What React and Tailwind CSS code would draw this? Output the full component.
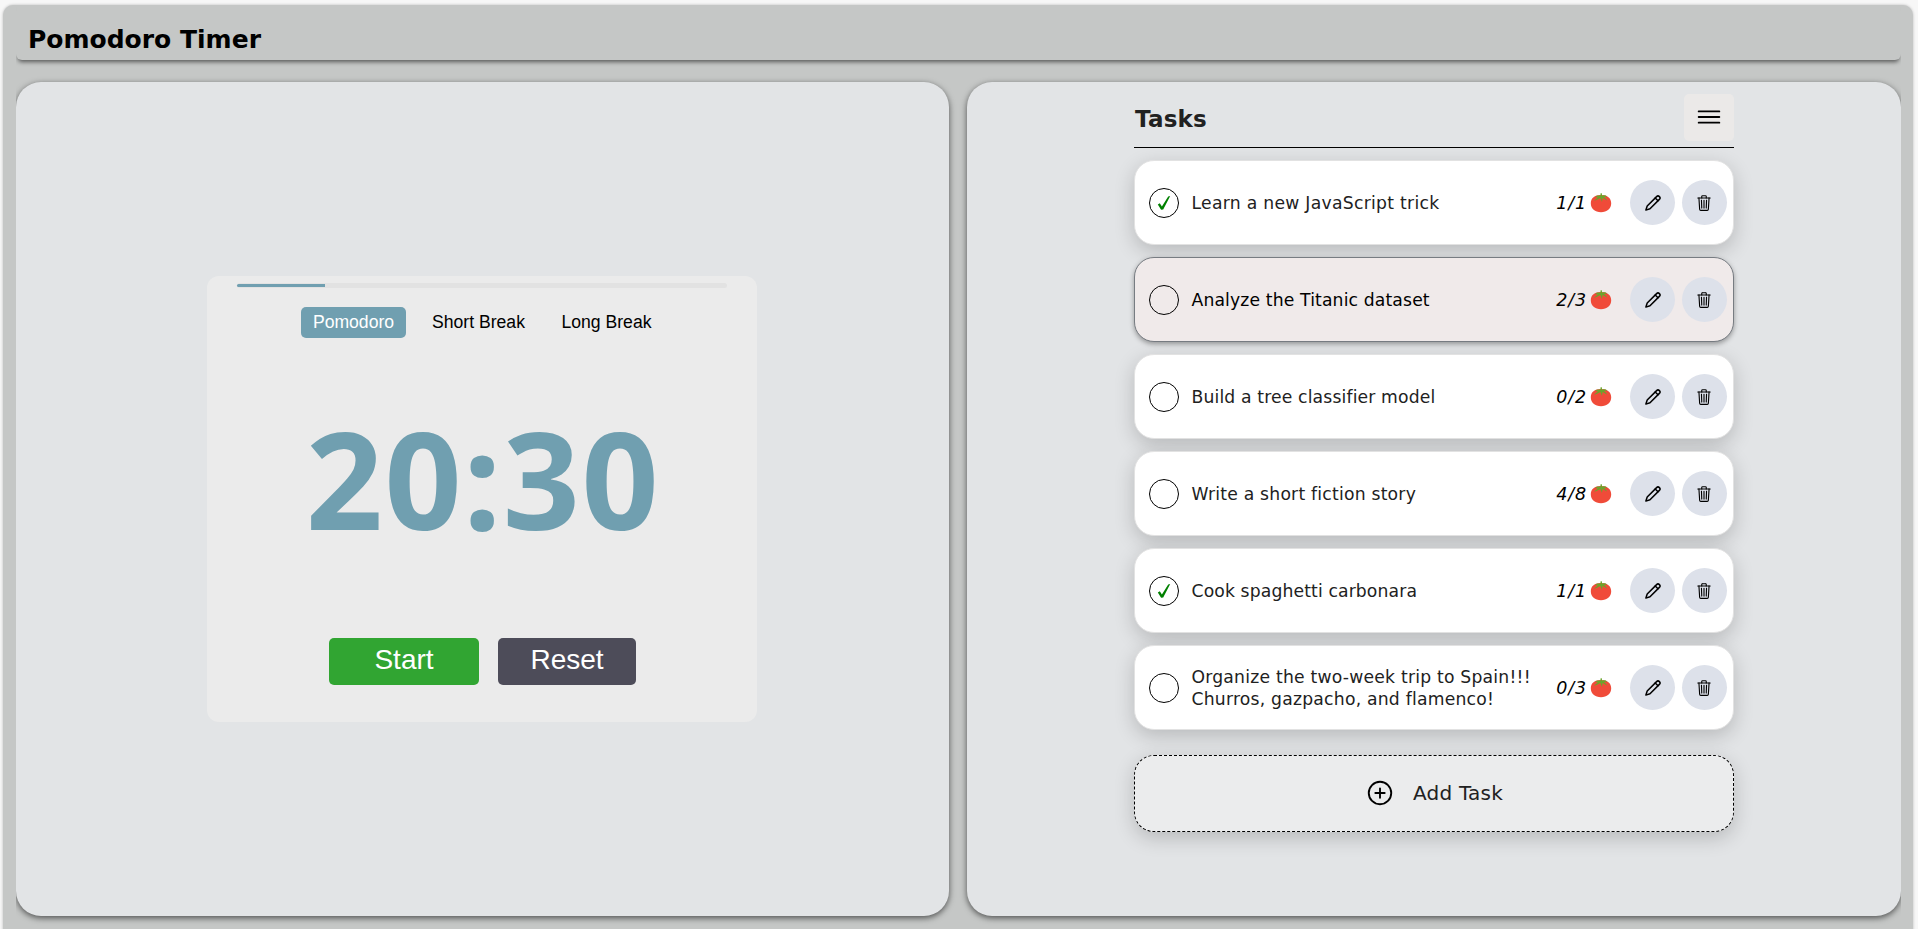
import { IoMenuOutline, IoAddCircleOutline, IoTrashOutline } from "react-icons/io5";

const tasks = [
  { lines: ["Learn a new JavaScript trick"], count: "1/1", done: true, tracking: "tracking-[0.28px]" },
  { lines: ["Analyze the Titanic dataset"], count: "2/3", active: true, tracking: "tracking-[0.14px]" },
  { lines: ["Build a tree classifier model"], count: "0/2", tracking: "tracking-[0.15px]" },
  { lines: ["Write a short fiction story"], count: "4/8", tracking: "tracking-[0.22px]" },
  { lines: ["Cook spaghetti carbonara"], count: "1/1", done: true, tracking: "tracking-[0.13px]" },
  { lines: ["Organize the two-week trip to Spain!!!", "Churros, gazpacho, and flamenco!"], count: "0/3", tracking: "tracking-[0.22px]" },
];

function Tomato() {
  return (
    <svg viewBox="0 0 22 20" className="h-5 w-[22px]">
      <path fill="#f04b39" d="M11 2C16.8 1.8 21.2 4.8 21.2 10.3C21.2 15.6 17 19.3 11 19.3S.8 15.6.8 10.3C.8 4.8 5.2 1.8 11 2Z" />
      <path fill="#6aa52c" d="M10.4.6 11.9.3 12 2.8C14 2 16 2.4 17.2 3.4L13.8 4C15.3 4.8 16.6 6 16.9 7.6L12.5 5.1 12 9 10.3 5C8.5 5.7 6.8 7.4 4 7.5L8 4.4 5.2 4C6.8 2.5 8.7 2.3 10.6 2.8Z" />
    </svg>
  );
}

function Pencil() {
  return (
    <svg viewBox="0 0 16 16" className="size-4" fill="none" stroke="#000" strokeWidth="1.5" strokeLinecap="round" strokeLinejoin="round">
      <path d="M.9 15.1 2.2 11 11.6 1.6A1.95 1.95 0 0 1 14.4 4.4L5 13.8Z" />
      <path d="M10.2 3 13 5.8" />
    </svg>
  );
}

function Task({ task }) {
  return (
    <li
      className={
        "flex h-[85px] items-center rounded-[20px] border pl-[14px] pr-[6px] " +
        (task.active
          ? "border-[#777c82] bg-[#f0eaea] shadow-[0_2px_5px_rgba(0,0,0,0.35)]"
          : "border-[#e2e2e2] bg-white shadow-[0_6px_20px_rgba(0,0,0,0.19)]")
      }
    >
      <span className="flex size-[30px] shrink-0 items-center justify-center rounded-full border border-black">
        {task.done && (
          <svg viewBox="0 0 14 16" className="size-4">
            <path d="M.8 9.4 2.8 8.3 4.9 11.4 11.2 1.6 13.2 1 6.2 14.4 4.1 14.7Z" fill="#008000" />
          </svg>
        )}
      </span>
      <div className={"ml-[12.5px] flex-1 text-[17.2px] leading-[22px] " + task.tracking + (task.active ? " text-black" : " text-[#212121]")}>
        {task.lines.map((line) => (
          <div key={line} className="whitespace-nowrap">{line}</div>
        ))}
      </div>
      <span className="mr-[3px] pt-px text-[17.5px] italic tracking-[0.9px] text-black">{task.count}</span>
      <Tomato />
      <button className="ml-[18px] flex size-[45px] items-center justify-center rounded-full bg-[#dde1ea]">
        <Pencil />
      </button>
      <button className="ml-[7px] flex size-[45px] items-center justify-center rounded-full bg-[#dde1ea] pr-px">
        <IoTrashOutline size={18} />
      </button>
    </li>
  );
}

export default function App() {
  return (
    <div className="h-[929px] overflow-hidden bg-[#f7f7f7] pl-[3px] pr-[5px] pt-[5px] font-['DejaVu_Sans',sans-serif] text-black">
      <div className="h-[940px] rounded-t-[10px] bg-[#c5c7c6] pl-[13px] pr-3 shadow-[0_0_3px_rgba(0,0,0,0.25)]">
        <div className="h-full overflow-hidden">
          <header className="flex h-[55px] items-center rounded-[6px] pl-[12px] pt-[15px] shadow-[0_4px_4px_-2px_rgba(0,0,0,0.55)]">
            <h1 className="text-[25px] font-bold leading-8">Pomodoro Timer</h1>
          </header>
          <main className="mt-[22px] flex gap-[18px]">
            <section className="flex h-[834px] w-[933px] justify-center rounded-[25px] bg-[#e2e4e6] pr-px pt-[194px] shadow-[0_2px_6px_rgba(0,0,0,0.6)]">
              <div className="flex h-[446px] w-[550px] flex-col items-center rounded-xl bg-[#ebebeb]">
                <div className="mt-[7px] h-[5px] w-[490px] rounded-full bg-[#e2e2e2] py-px">
                  <div className="h-[3px] w-[88px] rounded-l-full bg-[#709fb0]" />
                </div>
                <div className="mt-[19px] flex h-[31px] items-center self-start pl-[94px] font-['Liberation_Sans',sans-serif] text-[17.6px]">
                  <button className="h-full w-[105px] rounded-[5px] bg-[#709fb0] text-white">Pomodoro</button>
                  <button className="ml-[14px] w-[117px]">Short Break</button>
                  <button className="ml-[15px] w-[109px]">Long Break</button>
                </div>
                <div className="mt-[60px] flex h-[160px] items-center pl-[2px] font-['Noto_Sans',sans-serif] text-[135px] font-bold leading-[160px] tracking-[1.5px] text-[#709fb0]">20:30</div>
                <div className="mt-[80px] flex gap-[19px] pl-px font-['Liberation_Sans',sans-serif] text-[28px] text-white">
                  <button className="h-[47px] w-[150px] rounded-[5px] bg-[#31a532] pb-[3px]">Start</button>
                  <button className="h-[47px] w-[138px] rounded-[5px] bg-[#4d4c59] pb-[3px]">Reset</button>
                </div>
              </div>
            </section>
            <section className="flex h-[834px] w-[934px] justify-center rounded-[25px] bg-[#e2e4e6] shadow-[0_2px_6px_rgba(0,0,0,0.6)]">
              <div className="w-[600px]">
                <div className="flex h-[66px] items-start justify-between border-b border-black pt-3">
                  <h2 className="pl-px pt-[9px] text-[23px] font-bold leading-8 tracking-[0.2px] text-[#212121]">Tasks</h2>
                  <button className="flex h-[47px] w-[50px] items-center justify-center rounded-[5px] bg-[#ebe9e8] pb-px">
                    <IoMenuOutline size={30} />
                  </button>
                </div>
                <ul className="mt-[12px] flex flex-col gap-3">
                  {tasks.map((task) => (
                    <Task key={task.lines[0]} task={task} />
                  ))}
                </ul>
                <button className="mt-[25px] flex h-[77px] w-full items-center justify-center rounded-[20px] border border-dashed border-black bg-[#ebeced] pb-px text-[20px] tracking-[0.2px] text-[#212121] shadow-[0_6px_20px_rgba(0,0,0,0.19)]">
                  <IoAddCircleOutline size={30} className="mr-[18px] text-black" />
                  Add Task
                </button>
              </div>
            </section>
          </main>
        </div>
      </div>
    </div>
  );
}
